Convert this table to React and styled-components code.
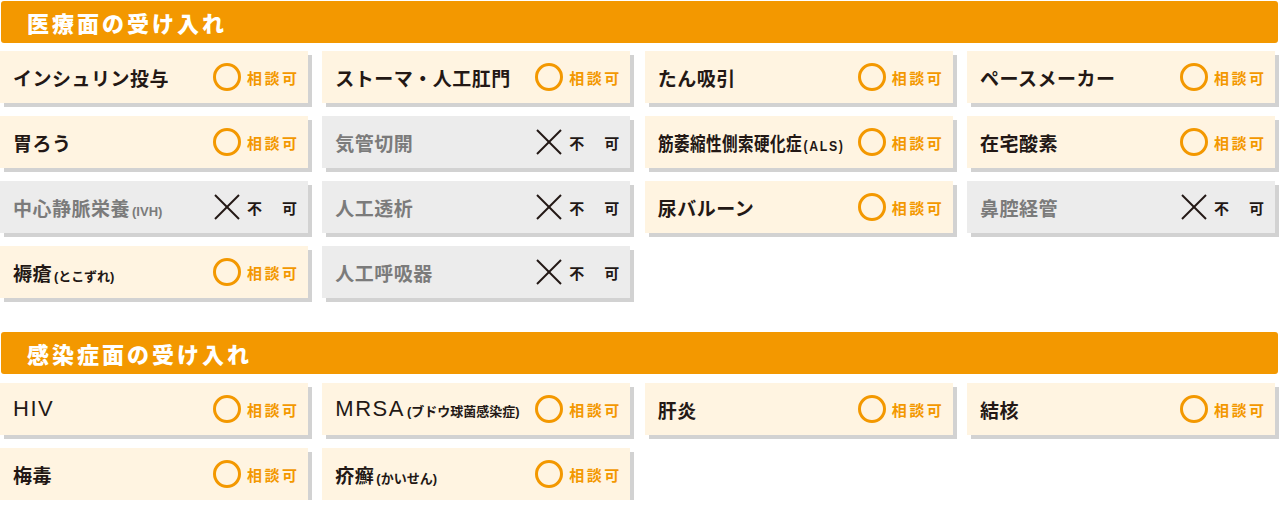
import React from "react";
import styled, { createGlobalStyle } from "styled-components";

const Global = createGlobalStyle`
  html, body { margin: 0; padding: 0; background: #fff; }
  body { font-family: "Noto Sans CJK JP", "Noto Sans", sans-serif; color: #231815; }
`;

const Page = styled.div`
  width: 1280px;
  display: flex;
  flex-direction: column;
  padding-top: 1px;
`;

const Section = styled.section`
  display: flex;
  flex-direction: column;
  gap: ${(p) => p.$gap}px;
  margin-bottom: ${(p) => p.$after}px;
`;

const Header = styled.h2`
  margin: 0 2px 0 1px;
  height: 42px;
  background: #f39800;
  border-radius: 3px;
  display: flex;
  align-items: center;
  padding-left: 26px;
  color: #fff;
  font-family: "Noto Sans CJK JP", sans-serif;
  font-weight: 900;
  font-size: 22px;
  letter-spacing: 3px;
  line-height: 1;
`;

const Grid = styled.div`
  display: grid;
  grid-template-columns: repeat(4, 308px);
  grid-auto-rows: 52px;
  column-gap: 14.33px;
  row-gap: 13px;
`;

const Card = styled.div`
  background: ${(p) => (p.$ok ? "#fff4e1" : "#ececec")};
  box-shadow: 4px 4px 0 #d2d2d2;
  display: flex;
  align-items: center;
  padding: 0 11px 0 13px;
  min-width: 0;
`;

const Label = styled.div`
  display: flex;
  align-items: baseline;
  white-space: nowrap;
  font-family: "Liberation Sans", "Noto Sans CJK JP", sans-serif;
  font-weight: 600;
  font-size: 19px;
  letter-spacing: 0.5px;
  color: ${(p) => (p.$ok ? "#231815" : "#7b7b7b")};
  transform: ${(p) => (p.$condensed ? "scaleX(0.82)" : "none")};
  transform-origin: left center;
  flex: 1;
  min-width: 0;
`;

const Latin = styled.span`
  font-weight: 400;
  font-size: 22px;
  letter-spacing: 1.5px;
`;

const Small = styled.span`
  font-size: ${(p) => (p.$wide ? "15px" : "13px")};
  letter-spacing: ${(p) => (p.$wide ? "2px" : "0")};
  margin-left: 2px;
`;

const Status = styled.div`
  display: flex;
  align-items: center;
  gap: 6px;
  flex-shrink: 0;
`;

const Circle = styled.span`
  width: 28px;
  height: 28px;
  box-sizing: border-box;
  border: 3px solid #f39800;
  border-radius: 50%;
  display: block;
`;

const StatusText = styled.span`
  width: 50px;
  display: flex;
  justify-content: space-between;
  font-family: "Noto Sans CJK JP", sans-serif;
  font-weight: 700;
  font-size: 15px;
  line-height: 1;
  color: ${(p) => (p.$ok ? "#f39800" : "#231815")};
`;

const Cross = () => (
  <svg width="28" height="28" viewBox="0 0 28 28" aria-hidden="true">
    <line x1="2" y1="2" x2="26" y2="26" stroke="#231815" strokeWidth="2" />
    <line x1="26" y1="2" x2="2" y2="26" stroke="#231815" strokeWidth="2" />
  </svg>
);

const medical = [
  { t: "インシュリン投与", ok: true },
  { t: "ストーマ・人工肛門", ok: true },
  { t: "たん吸引", ok: true },
  { t: "ペースメーカー", ok: true },
  { t: "胃ろう", ok: true },
  { t: "気管切開", ok: false },
  { t: "筋萎縮性側索硬化症", s: "(ALS)", wide: true, ok: true, condensed: true },
  { t: "在宅酸素", ok: true },
  { t: "中心静脈栄養", s: "(IVH)", ok: false },
  { t: "人工透析", ok: false },
  { t: "尿バルーン", ok: true },
  { t: "鼻腔経管", ok: false },
  { t: "褥瘡", s: "(とこずれ)", ok: true },
  { t: "人工呼吸器", ok: false },
];

const infection = [
  { t: "HIV", latin: true, ok: true },
  { t: "MRSA", latin: true, s: "(ブドウ球菌感染症)", ok: true },
  { t: "肝炎", ok: true },
  { t: "結核", ok: true },
  { t: "梅毒", ok: true },
  { t: "疥癬", s: "(かいせん)", ok: true },
];

const Item = ({ item }) => (
  <Card $ok={item.ok}>
    <Label $ok={item.ok} $condensed={item.condensed}>
      {item.latin ? <Latin>{item.t}</Latin> : item.t}
      {item.s && <Small $wide={item.wide}>{item.s}</Small>}
    </Label>
    <Status>
      {item.ok ? <Circle /> : <Cross />}
      <StatusText $ok={item.ok}>
        {item.ok ? (
          <>
            <span>相</span>
            <span>談</span>
            <span>可</span>
          </>
        ) : (
          <>
            <span>不</span>
            <span>可</span>
          </>
        )}
      </StatusText>
    </Status>
  </Card>
);

export default function App() {
  return (
    <>
      <Global />
      <Page>
        <Section $gap={8} $after={34}>
          <Header>医療面の受け入れ</Header>
          <Grid>
            {medical.map((it) => (
              <Item key={it.t} item={it} />
            ))}
          </Grid>
        </Section>
        <Section $gap={9} $after={0}>
          <Header>感染症面の受け入れ</Header>
          <Grid>
            {infection.map((it) => (
              <Item key={it.t} item={it} />
            ))}
          </Grid>
        </Section>
      </Page>
    </>
  );
}
